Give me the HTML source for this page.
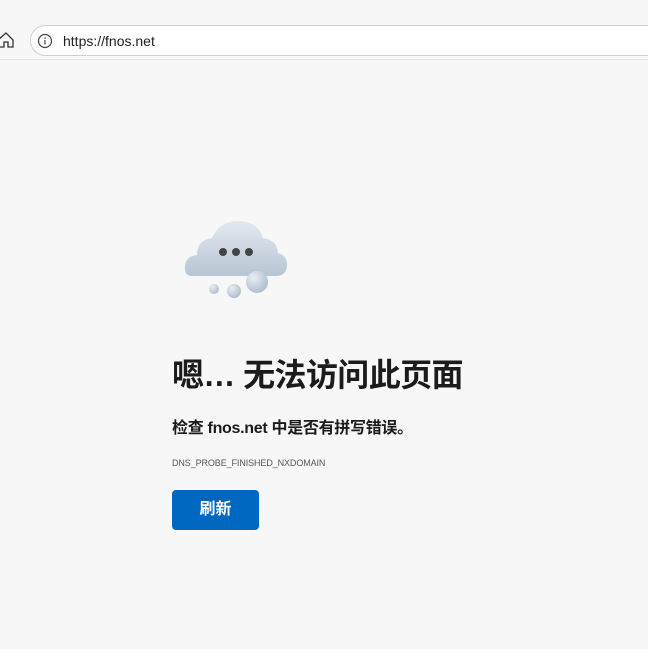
<!DOCTYPE html>
<html><head><meta charset="utf-8"><style>
body{margin:0;width:648px;height:649px;background:#f7f7f7;font-family:"Liberation Sans","Noto Sans CJK SC",sans-serif;position:relative;overflow:hidden}
.bar{position:absolute;left:0;top:0;width:648px;height:59px;background:#f7f7f7;border-bottom:1px solid #e3e3e3}
.addr{position:absolute;left:30px;top:25px;width:640px;height:31px;background:#fff;border:1px solid #d0d0d0;border-radius:16px;box-sizing:border-box}
.url{position:absolute;left:63px;top:33px;font-size:14px;color:#1f1f1f}
h1{position:absolute;left:172px;top:350px;margin:0;font-size:32px;font-weight:bold;color:#1b1b1b;white-space:nowrap;letter-spacing:-0.6px}
.sub{position:absolute;left:172px;top:414px;font-size:16px;font-weight:bold;color:#1b1b1b;letter-spacing:-0.3px}
.code{position:absolute;left:172px;top:458px;font-size:9px;color:#555;letter-spacing:-0.1px}
.btn{position:absolute;left:172px;top:490px;width:87px;height:40px;background:#0067c0;border-radius:4px;color:#fff;font-size:16px;font-weight:bold;text-align:center;line-height:40px}
</style></head><body>
<div class="bar"></div>
<svg style="position:absolute;left:0;top:32px" width="14" height="16" viewBox="0 0 14 16"><path d="M-2 8 L6 1 L13 8 V15 H8 V10 H4 V15 H-1" fill="none" stroke="#333" stroke-width="1.3"/></svg>
<div class="addr"></div>
<svg style="position:absolute;left:37px;top:33px" width="16" height="16" viewBox="0 0 16 16"><circle cx="8" cy="8" r="6.5" fill="none" stroke="#444" stroke-width="1.2"/><rect x="7.4" y="7" width="1.2" height="4.5" fill="#444"/><circle cx="8" cy="5" r=".8" fill="#444"/></svg>
<div class="url">https://fnos.net</div>
<svg style="position:absolute;left:180px;top:215px" width="115" height="90" viewBox="180 215 115 90">
<defs><linearGradient id="g" x1="0" y1="0" x2="0" y2="1"><stop offset="0" stop-color="#e3e9f1"/><stop offset="1" stop-color="#b8c5d4"/></linearGradient>
<radialGradient id="b" cx=".35" cy=".3" r=".8"><stop offset="0" stop-color="#e8eef5"/><stop offset="1" stop-color="#a9b8ca"/></radialGradient></defs>
<path d="M192 276 Q184 276 185 266 Q186 256 197 255 Q197 240 212 238 Q220 220 240 221 Q258 222 263 238 Q277 240 278 253 Q288 256 287 266 Q286 276 276 276 Z" fill="url(#g)"/>
<circle cx="223" cy="252" r="4" fill="#444"/><circle cx="236" cy="252" r="4" fill="#444"/><circle cx="249" cy="252" r="4" fill="#444"/>
<circle cx="214" cy="289" r="5" fill="url(#b)"/><circle cx="234" cy="291" r="7" fill="url(#b)"/><circle cx="257" cy="282" r="11" fill="url(#b)"/>
</svg>
<h1>嗯… 无法访问此页面</h1>
<div class="sub">检查 fnos.net 中是否有拼写错误。</div>
<div class="code">DNS_PROBE_FINISHED_NXDOMAIN</div>
<div class="btn">刷新</div>
</body></html>
